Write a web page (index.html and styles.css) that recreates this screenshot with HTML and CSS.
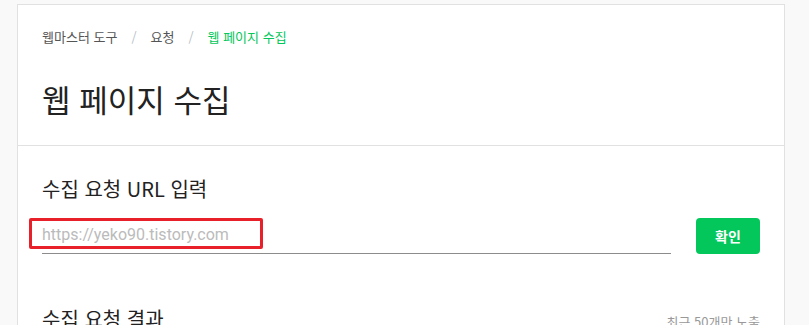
FILE: index.html
```html
<!DOCTYPE html>
<html lang="ko">
<head>
<meta charset="utf-8">
<title>웹 페이지 수집</title>
<link rel="stylesheet" href="styles.css">
</head>
<body>
<div class="page">
  <div class="card">
    <div class="card-head">
      <nav class="crumbs">
        <span class="crumb">웹마스터 도구</span>
        <span class="sep">/</span>
        <span class="crumb">요청</span>
        <span class="sep">/</span>
        <span class="crumb current">웹 페이지 수집</span>
      </nav>
      <h1 class="title">웹 페이지 수집</h1>
    </div>
    <div class="card-body">
      <h2 class="section-title">수집 요청 URL 입력</h2>
      <div class="input-row">
        <div class="field">
          <input class="url-input" type="text" placeholder="https://yeko90.tistory.com">
        </div>
        <button class="btn">확인</button>
      </div>
      <div class="result-head">
        <h2 class="section-title">수집 요청 결과</h2>
        <span class="note">최근 50개만 노출</span>
      </div>
    </div>
  </div>
  <div class="highlight"></div>
</div>
</body>
</html>
```

FILE: styles.css
```css
* { box-sizing: border-box; }
html, body { margin: 0; padding: 0; }
body {
  background: #f9f9f9;
  font-family: "Noto Sans CJK KR", "Noto Sans", sans-serif;
  color: #222;
  overflow: hidden;
}
.page {
  position: relative;
  padding: 4px 0 0 17px;
}
.card {
  width: 768px;
  background: #fff;
  border: 1px solid #e1e1e1;
  min-height: 400px;
}
.card-head {
  padding: 20px 24px 22px;
  border-bottom: 1px solid #e1e1e1;
}
.crumbs {
  display: flex;
  align-items: center;
  font-size: 13px;
  line-height: 24px;
  color: #555;
}
.sep {
  color: #b8bfc8;
  margin: 0 14px;
}
.current { color: #03c75a; }
.title {
  margin: 26px 0 0;
  font-size: 31px;
  font-weight: 400;
  line-height: 48px;
  color: #222;
}
.card-body {
  padding: 28px 24px 0;
}
.section-title {
  margin: 0;
  font-size: 20px;
  font-weight: 400;
  line-height: 30px;
  color: #222;
}
.input-row {
  display: flex;
  align-items: flex-end;
  gap: 25px;
  margin-top: 14px;
}
.field { flex: 1; }
.url-input {
  width: 100%;
  height: 36px;
  border: 0;
  border-bottom: 1px solid #8c8c8c;
  padding: 0 0 2px;
  font-family: Roboto, "Liberation Sans", sans-serif;
  font-size: 16px;
  color: #222;
  outline: none;
  background: transparent;
}
.url-input::placeholder { color: #bbb; }
.btn {
  width: 64px;
  height: 36px;
  border: 0;
  border-radius: 4px;
  background: #03c75a;
  color: #fff;
  font-family: "Noto Sans CJK KR", sans-serif;
  font-size: 14px;
  font-weight: 700;
}
.result-head {
  display: flex;
  justify-content: space-between;
  align-items: baseline;
  margin-top: 50px;
}
.note {
  font-size: 13px;
  color: #999;
}
.highlight {
  position: absolute;
  left: 29px;
  top: 218px;
  width: 234px;
  height: 31px;
  border: 3px solid #e8202a;
  border-radius: 2px;
}
```
